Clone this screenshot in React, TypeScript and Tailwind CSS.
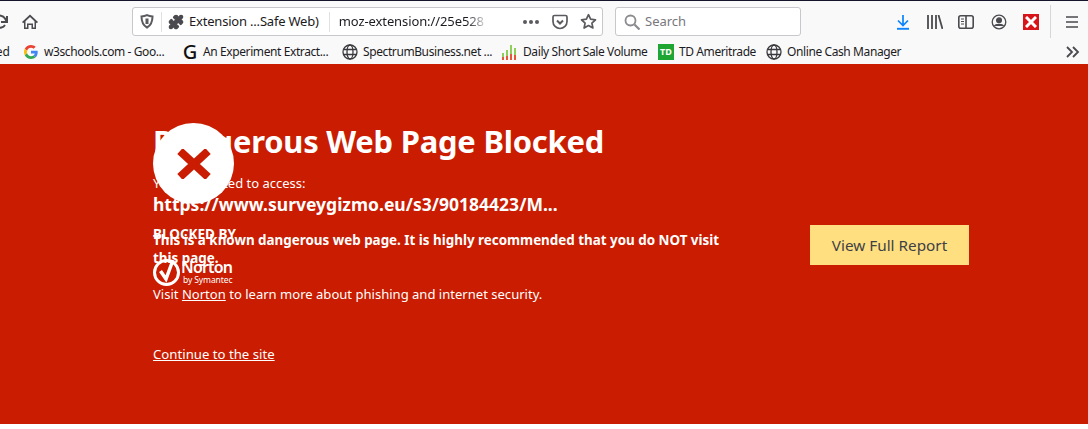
import { Puzzle } from 'lucide-react';

const font = "font-['Noto_Sans','Open_Sans',sans-serif]";

function Globe() {
  return (
    <svg width="16" height="16" viewBox="0 0 16 16" fill="none" stroke="#3a3a3e" strokeWidth="1.3">
      <circle cx="8" cy="8" r="7" />
      <ellipse cx="8" cy="8" rx="3" ry="7" />
      <path d="M1.5 5.5h13M1.5 10.5h13" />
    </svg>
  );
}

function GoogleMark() {
  return (
    <svg width="14" height="14" viewBox="0 0 48 48">
      <path fill="#EA4335" d="M24 9.5c3.5 0 6.700 1.200 9.200 3.600l6.900-6.900C35.900 2.400 30.400 0 24 0 14.600 0 6.500 5.400 2.600 13.200l8 6.200C12.500 13.700 17.800 9.500 24 9.500z" />
      <path fill="#4285F4" d="M47 24.500c0-1.600-.1-3.100-.4-4.500H24v9h12.900c-.6 3-2.200 5.500-4.800 7.200l7.700 6C44.300 38 47 31.800 47 24.500z" />
      <path fill="#FBBC05" d="M10.600 28.600C10.100 27.200 9.800 25.600 9.800 24s.3-3.200.8-4.600l-8-6.200C1 16.400 0 20.100 0 24s1 7.600 2.600 10.800l8-6.200z" />
      <path fill="#34A853" d="M24 48c6.500 0 11.900-2.100 15.900-5.800l-7.700-6c-2.200 1.500-4.900 2.300-8.200 2.300-6.200 0-11.500-4.200-13.400-9.900l-8 6.200C6.500 42.600 14.600 48 24 48z" />
    </svg>
  );
}

function Bars() {
  return (
    <svg width="16" height="16" viewBox="0 0 16 16">
      <rect x="0" y="9" width="2" height="4" fill="#8fce5a" />
      <rect x="0" y="13" width="2" height="3" fill="#e8563a" />
      <rect x="4" y="6" width="2" height="6" fill="#8fce5a" />
      <rect x="4" y="12" width="2" height="4" fill="#e8563a" />
      <rect x="8" y="1" width="2" height="9" fill="#8fce5a" />
      <rect x="8" y="10" width="2" height="6" fill="#e8563a" />
      <rect x="12" y="4" width="2" height="7" fill="#8fce5a" />
      <rect x="12" y="11" width="2" height="5" fill="#e8563a" />
    </svg>
  );
}

function Bookmark({ icon, label, width }: { icon: React.ReactNode; label: string; width: string }) {
  return (
    <div className={`flex items-center gap-[5px] shrink-0 ${width}`}>
      <span className="w-4 h-4 flex items-center justify-center shrink-0">{icon}</span>
      <span className="text-[12px] leading-4 text-[#1c1b22] whitespace-nowrap tracking-[-0.4px]">{label}</span>
    </div>
  );
}

export default function App() {
  return (
    <div className={`h-[429px] w-[1088px] overflow-hidden bg-white ${font}`}>
      {/* browser chrome */}
      <div className="h-[64px] bg-[#f9f9fa] border-t border-[#14142b]">
        <div className="h-[41px] flex items-center">
          {/* reload, cut off at the window edge */}
          <svg width="8" height="16" viewBox="0 0 8 16" fill="none" stroke="#4a4a4f" strokeWidth="2" className="shrink-0">
            <path d="M-4 3a6 6 0 0 1 9 1.500L7 8M1 8h6V2M5 11a6 6 0 0 1-8 2" />
          </svg>
          <svg width="16" height="16" viewBox="0 0 16 16" fill="#4a4a4f" className="ml-[14px] shrink-0">
            <path d="M8 .5 0 8l1.200 1.300L2 8.500V15h4.500v-4h3v4H14V8.500l.8.8L16 8zM12.500 13.500H11v-4H5v4H3.500V7.200L8 2.900l4.500 4.300z" />
          </svg>
          <div className="ml-[94px] w-[471px] h-[29px] bg-white border border-[#c8c8cc] rounded-[3px] flex items-center shrink-0">
            <svg width="14" height="15" viewBox="0 0 14 15" fill="none" stroke="#5a5a5f" strokeWidth="2" className="ml-[7px] shrink-0">
              <path d="M7 1.200c2 .9 3.600 1.200 5.500 1.300 0 5-1.500 8.800-5.500 11-4-2.200-5.500-6-5.500-11C3.400 2.400 5 2.100 7 1.200z" />
              <path d="M7 4.500v5.500" strokeWidth="3" />
            </svg>
            <div className="ml-[7px] w-px h-[20px] bg-[#e1e1e3] shrink-0" />
            <Puzzle size={16} fill="#4a4a4f" stroke="#4a4a4f" className="ml-[6px] shrink-0" />
            <span className="ml-[5px] text-[13px] text-[#1c1b22] whitespace-nowrap tracking-[-0.2px]">Extension ...Safe Web)</span>
            <div className="ml-[10px] w-px h-[20px] bg-[#e1e1e3] shrink-0" />
            <span className="ml-[9px] w-[150px] overflow-hidden text-[13px] text-[#1c1b22] whitespace-nowrap tracking-[-0.1px] [mask-image:linear-gradient(to_right,black_85%,transparent)]">moz-extension://25e528</span>
            <div className="ml-auto flex items-center gap-[3px] text-[#4a4a4f] mr-[5px]">
              <span className="w-4 flex justify-center gap-[2px]">
                <i className="w-[4px] h-[4px] rounded-full bg-[#5a5a5f]" />
                <i className="w-[4px] h-[4px] rounded-full bg-[#5a5a5f]" />
                <i className="w-[4px] h-[4px] rounded-full bg-[#5a5a5f]" />
              </span>
              <svg width="16" height="16" viewBox="0 0 16 16" fill="none" stroke="#5a5a5f" strokeWidth="1.700" className="ml-[10px]">
                <path d="M2.500 1.500h11a1.500 1.500 0 0 1 1.500 1.500v4.500a7 7 0 0 1-14 0V3a1.500 1.500 0 0 1 1.500-1.500z" />
                <path d="m5 6.500 3 3 3-3" strokeWidth="2" />
              </svg>
              <svg width="17" height="17" viewBox="0 0 17 17" fill="none" stroke="#5a5a5f" strokeWidth="1.700" className="ml-[9px]">
                <path d="m8.500 1.700 2.100 4.500 4.900.6-3.600 3.300 1 4.900-4.400-2.500L4.100 15l1-4.900-3.600-3.300 4.900-.6z" strokeLinejoin="round" />
              </svg>
            </div>
          </div>
          <div className="ml-[12px] w-[186px] h-[29px] bg-white border border-[#c8c8cc] rounded-[3px] flex items-center shrink-0">
            <svg width="16" height="16" viewBox="0 0 16 16" fill="none" stroke="#8a8a8f" strokeWidth="1.800" className="ml-[8px]">
              <circle cx="6.500" cy="6.500" r="5" />
              <path d="m10.500 10.500 5 5" strokeWidth="2.200" />
            </svg>
            <span className="ml-[5px] text-[13px] text-[#77777c]">Search</span>
          </div>
          {/* toolbar buttons */}
          <div className="ml-[95px] flex items-center shrink-0">
            <svg width="14" height="16" viewBox="0 0 14 16" fill="none" stroke="#0a84ff" strokeWidth="1.700">
              <path d="M7 1v10M2 6.500 7 11.500l5-5" />
              <path d="M1 14.800h12" strokeWidth="1.900" />
            </svg>
            <svg width="16" height="14" viewBox="0 0 16 14" fill="none" stroke="#4a4a4f" strokeWidth="1.800" className="ml-[17px]">
              <path d="M1 0v14M5 0v14M9 0v14M11.500 0l4 14" />
            </svg>
            <svg width="16" height="14" viewBox="0 0 16 14" fill="none" stroke="#4a4a4f" strokeWidth="1.600" className="ml-[15px]">
              <rect x=".8" y=".8" width="14.400" height="12.400" rx="2" />
              <path d="M8 1v12" />
              <path d="M3 4h3M3 6.500h3M3 9h3" strokeWidth="1" />
            </svg>
            <svg width="16" height="16" viewBox="0 0 16 16" fill="none" stroke="#4a4a4f" strokeWidth="1.300" className="ml-[17px]">
              <circle cx="8" cy="8" r="6.800" />
              <circle cx="8" cy="6.300" r="2.400" fill="#4a4a4f" />
              <path d="M3.500 12c1-2.200 8-2.200 9 0" fill="#4a4a4f" />
            </svg>
            <span className="ml-[16px] w-[16px] h-[16px] bg-[#d7141a] flex items-center justify-center">
              <svg width="12" height="12" viewBox="0 0 12 12" stroke="#fff" strokeWidth="3">
                <path d="m1 1 10 10M11 1 1 11" />
              </svg>
            </span>
            <div className="ml-[11px] w-px h-[33px] bg-[#d7d7db]" />
            <svg width="12" height="12" viewBox="0 0 12 12" stroke="#4a4a4f" strokeWidth="1.500" className="ml-[15px]">
              <path d="M0 1h12M0 6h12M0 11h12" />
            </svg>
          </div>
        </div>
        {/* bookmarks */}
        <div className="h-[19px] flex items-center">
          <span className="w-[10px] text-[12px] text-[#1c1b22] shrink-0 overflow-hidden flex justify-end">ed</span>
          <div className="ml-[13px] flex items-center">
            <Bookmark icon={<GoogleMark />} label="w3schools.com - Goo..." width="w-[159px]" />
            <Bookmark icon={<span className="text-[20px] font-medium leading-4 text-[#111]">G</span>} label="An Experiment Extract..." width="w-[160px]" />
            <Bookmark icon={<Globe />} label="SpectrumBusiness.net ..." width="w-[160px]" />
            <Bookmark icon={<Bars />} label="Daily Short Sale Volume" width="w-[156px]" />
            <Bookmark
              icon={<span className="w-4 h-4 bg-[#1fa531] text-white text-[9px] font-bold leading-4 text-center">TD</span>}
              label="TD Ameritrade"
              width="w-[108px]"
            />
            <Bookmark icon={<Globe />} label="Online Cash Manager" width="w-[140px]" />
          </div>
          <svg width="14" height="12" viewBox="0 0 14 12" fill="none" stroke="#4a4a4f" strokeWidth="1.800" className="ml-[160px] shrink-0">
            <path d="m1 1 5 5-5 5M7 1l5 5-5 5" />
          </svg>
        </div>
      </div>

      {/* blocked page */}
      <main className="h-[360px] bg-[#c91c00] text-white pl-[153px] flex relative">
        <div className="w-[657px] pt-[56px] shrink-0">
          <h1 className="text-[30.900px] leading-[42px] font-bold whitespace-nowrap tracking-[-0.2px]">Dangerous Web Page Blocked</h1>
          <p className="mt-[12px] text-[13px] leading-[18px]">You attempted to access:</p>
          <p className="text-[17.500px] leading-[24px] font-bold">https://www.surveygizmo.eu/s3/90184423/M...</p>
          <p className="mt-[15px] w-[580px] text-[13.400px] leading-[18px] font-bold">
            This is a known dangerous web page. It is highly recommended that you do NOT visit this page.
          </p>
          <p className="mt-[18px] text-[13.050px] leading-[18px]">
            Visit <a className="underline">Norton</a> to learn more about phishing and internet security.
          </p>
          <p className="mt-[42px] text-[13.200px] leading-[18px]">
            <a className="underline">Continue to the site</a>
          </p>
        </div>
        <div className="pt-[161px]">
          <button className="w-[159px] h-[40px] bg-[#ffdf80] text-[#3f3f46] text-[15.300px]">View Full Report</button>
        </div>

        {/* overlapping badge and vendor logo */}
        <div className="absolute left-[153px] top-[59px] w-[81px] h-[81px] rounded-full bg-white flex items-center justify-center">
          <svg width="34" height="30" viewBox="0 0 34 30" stroke="#c91c00" strokeWidth="8">
            <path d="m3 2 28 26M31 2 3 28" />
          </svg>
        </div>
        <div className="absolute left-[153px] top-[161px]">
          <p className="text-[13.500px] leading-[18px] font-bold">BLOCKED BY</p>
          <div className="mt-[16px] flex items-center gap-[1px]">
            <svg width="27" height="27" viewBox="0 0 27 27" fill="none" className="overflow-visible">
              <circle cx="13.500" cy="13.500" r="12" stroke="#fff" strokeWidth="3" />
              <path d="m7.500 12 5.500 8L20 1" stroke="#fff" strokeWidth="3.500" />
            </svg>
            <div className="flex flex-col -mt-[2px]">
              <span className="text-[16px] leading-[16px] font-semibold tracking-[-0.8px]">Norton</span>
              <span className="pl-[2px] text-[8.500px] leading-[9px] tracking-[-0.1px]">by Symantec</span>
            </div>
          </div>
        </div>
      </main>
    </div>
  );
}
